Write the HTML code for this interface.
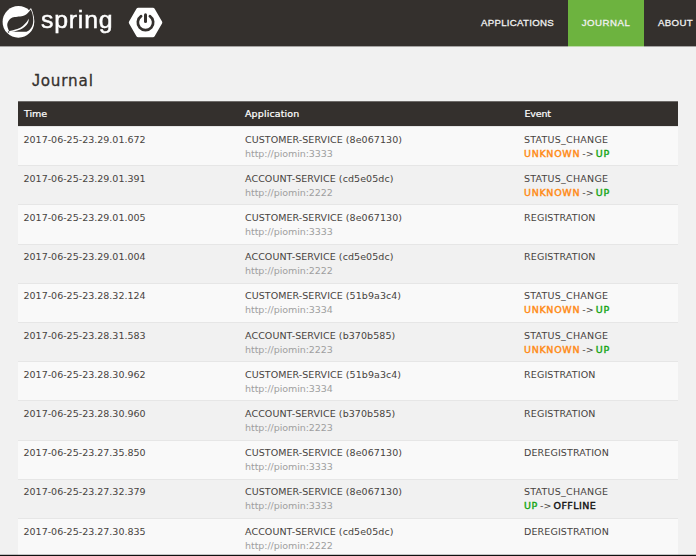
<!DOCTYPE html>
<html lang="en">
<head>
<meta charset="utf-8">
<title>Spring Boot Admin</title>
<style>
html,body{margin:0;padding:0;}
body{width:696px;height:556px;overflow:hidden;background:#f1f1f1;font-family:"DejaVu Sans","Liberation Sans",sans-serif;color:#34302d;position:relative;}
.nav{position:absolute;left:0;top:0;width:720px;height:46px;background:#34302d;box-shadow:0 1px 0 #a5a4a3;}
.word{position:absolute;left:41px;top:4.7px;-webkit-text-stroke:0.5px #fff;font-family:"Liberation Sans",sans-serif;font-size:24.8px;line-height:30px;color:#fff;letter-spacing:0.8px;will-change:transform;}
.menu{position:absolute;left:467px;top:0;height:46px;display:flex;}
.menu a{display:block;height:46px;line-height:45px;text-align:center;color:#f1f1f1;font-family:"Liberation Sans",sans-serif;font-size:9.7px;text-decoration:none;white-space:nowrap;letter-spacing:0.25px;-webkit-text-stroke:0.3px #f1f1f1;}
.menu a.active{background:#6db33f;box-shadow:0 1px 0 #bcd8aa;}
h1{position:absolute;left:32px;top:69px;margin:0;font-size:15.2px;line-height:24px;font-weight:normal;letter-spacing:0.82px;color:#34302d;-webkit-text-stroke:0.3px #34302d;}
h1 span{font-family:"Liberation Sans",sans-serif;font-size:15.8px;}
.tbl{position:absolute;left:18px;top:0;width:660px;font-size:9.5px;line-height:13.78px;color:#474340;}
.thead{position:absolute;left:0;top:101px;width:660px;height:25px;background:#34302d;color:#fff;box-shadow:inset 0 1px 0 #6d6a68;}
.thead div{position:absolute;top:6px;-webkit-text-stroke:0.22px #fff;letter-spacing:-0.08px;}
.row{position:absolute;left:0;width:660px;box-shadow:inset 0 1px 0 #e6e6e6;}
.row.odd{background:#f9f9f9;}
.row.even{background:#f1f1f1;}
.c{position:absolute;white-space:nowrap;}
.c1{left:5.5px;}
.c2{left:227px;}
.c3{left:506px;}
.muted{color:#9f9f9f;}
.b{-webkit-text-stroke:0.4px currentColor;}
.a1{letter-spacing:0.06px;}
.a2{letter-spacing:0.08px;}
.muted{letter-spacing:-0.06px;}
.e1{letter-spacing:0.24px;}
.e2{letter-spacing:0.15px;}
.e3{letter-spacing:0.13px;}
.st{word-spacing:-0.9px;}
.st .unk{letter-spacing:0.69px;}
.st .up{letter-spacing:0.6px;}
.st .off{letter-spacing:0.45px;}
.unk{color:#ff8a14;}
.up{color:#14a514;}
.off{color:#111;}
.bottomline{position:absolute;left:0;top:554px;width:696px;height:1px;background:rgba(17,17,17,0.22);border-bottom:1px solid #111;}
</style>
</head>
<body>
<div class="nav">
  <svg width="180" height="46" viewBox="0 0 180 46" style="position:absolute;left:0;top:0">
    <circle cx="18.4" cy="21.9" r="15.8" fill="#fff"/>
    <path d="M30.99,7.94 C31.28,8.67 32.19,10.59 32.70,12.34 C33.21,14.09 33.82,16.62 34.05,18.46 C34.27,20.29 34.29,21.77 34.05,23.35 C33.80,24.93 33.44,26.41 32.58,27.94 C31.72,29.46 29.52,31.76 28.91,32.52 L14.23,32.52 L25.24,14.17 Z" fill="#fff"/>
    <path d="M30.50,9.40 C30.24,9.81 29.58,11.06 28.91,11.85 C28.24,12.65 27.48,13.48 26.46,14.17 C25.45,14.87 24.32,15.59 22.80,16.01 C21.27,16.43 19.02,16.42 17.29,16.68 C15.56,16.95 13.72,17.10 12.40,17.60 C11.07,18.10 10.13,18.82 9.34,19.68 C8.54,20.54 7.97,21.77 7.63,22.74 C7.28,23.71 7.18,24.47 7.26,25.49 C7.34,26.51 7.79,27.91 8.12,28.85 C8.44,29.80 9.03,30.79 9.22,31.18 L15.15,31.79 L26.46,31.79 C26.99,31.45 28.73,30.67 29.65,29.77 C30.56,28.87 31.40,27.58 31.97,26.41 C32.54,25.23 32.87,24.06 33.07,22.74 C33.27,21.41 33.31,19.98 33.19,18.46 C33.07,16.93 32.64,14.84 32.34,13.56 C32.03,12.29 31.66,11.50 31.36,10.81 C31.05,10.12 30.64,9.64 30.50,9.40 Z" fill="#34302d"/>
    <path d="M9.46,30.93 C10.77,30.61 15.07,29.81 17.29,28.98 C19.51,28.14 21.27,27.04 22.80,25.92 C24.32,24.80 25.43,23.47 26.46,22.25 C27.50,21.02 28.61,19.19 29.03,18.58 C28.85,19.33 28.65,21.74 27.93,23.10 C27.22,24.47 26.02,25.69 24.75,26.77 C23.49,27.85 22.10,28.81 20.35,29.59 C18.60,30.36 16.05,31.01 14.23,31.42 C12.42,31.83 10.26,31.93 9.46,32.03 Z" fill="#fff"/>
    <circle cx="8.5" cy="32" r="0.75" fill="#34302d"/>
    <polygon points="130.8,22.55 138.18,9.8 152.92,9.8 160.3,22.55 152.92,35.3 138.18,35.3" fill="#fff" stroke="#fff" stroke-width="4" stroke-linejoin="round"/>
    <path d="M141.1,16.2 A7.7,7.7 0 1 0 149.9,16.2" fill="none" stroke="#34302d" stroke-width="2.7" stroke-linecap="round"/>
    <line x1="145.5" y1="14.8" x2="145.5" y2="21.6" stroke="#34302d" stroke-width="3" stroke-linecap="round"/>
  </svg>
  <span class="word">spring</span>
  <div class="menu">
    <a style="width:101px">APPLICATIONS</a><a class="active" style="width:76px;letter-spacing:0.5px">JOURNAL</a><a style="width:63px;letter-spacing:0.35px">ABOUT</a>
  </div>
</div>
<h1><span>J</span>ournal</h1>
<div class="tbl">
<div class="thead"><div style="left:6px">Time</div><div style="left:227px;letter-spacing:0.11px">Application</div><div style="left:506.5px;letter-spacing:-0.18px">Event</div></div>
<div class="row odd" style="top:126px;height:39px"><div class="c c1" style="top:6.91px">2017-06-25-23.29.01.672</div><div class="c c2" style="top:6.91px"><span class="a1">CUSTOMER-SERVICE (8e067130)</span><br><span class="muted">http://piomin:3333</span></div><div class="c c3" style="top:6.91px"><span class="e1">STATUS_CHANGE</span><br><span class="st"><span class="b unk">UNKNOWN</span> -&gt; <span class="b up">UP</span></span></div></div>
<div class="row even" style="top:165px;height:39px"><div class="c c1" style="top:6.91px">2017-06-25-23.29.01.391</div><div class="c c2" style="top:6.91px"><span class="a2">ACCOUNT-SERVICE (cd5e05dc)</span><br><span class="muted">http://piomin:2222</span></div><div class="c c3" style="top:6.91px"><span class="e1">STATUS_CHANGE</span><br><span class="st"><span class="b unk">UNKNOWN</span> -&gt; <span class="b up">UP</span></span></div></div>
<div class="row odd" style="top:204px;height:40px"><div class="c c1" style="top:6.91px">2017-06-25-23.29.01.005</div><div class="c c2" style="top:6.91px"><span class="a1">CUSTOMER-SERVICE (8e067130)</span><br><span class="muted">http://piomin:3333</span></div><div class="c c3" style="top:6.91px"><span class="e2">REGISTRATION</span></div></div>
<div class="row even" style="top:244px;height:39px"><div class="c c1" style="top:5.91px">2017-06-25-23.29.01.004</div><div class="c c2" style="top:5.91px"><span class="a2">ACCOUNT-SERVICE (cd5e05dc)</span><br><span class="muted">http://piomin:2222</span></div><div class="c c3" style="top:5.91px"><span class="e2">REGISTRATION</span></div></div>
<div class="row odd" style="top:283px;height:39px"><div class="c c1" style="top:5.91px">2017-06-25-23.28.32.124</div><div class="c c2" style="top:5.91px"><span class="a1">CUSTOMER-SERVICE (51b9a3c4)</span><br><span class="muted">http://piomin:3334</span></div><div class="c c3" style="top:5.91px"><span class="e1">STATUS_CHANGE</span><br><span class="st"><span class="b unk">UNKNOWN</span> -&gt; <span class="b up">UP</span></span></div></div>
<div class="row even" style="top:322px;height:39px"><div class="c c1" style="top:6.91px">2017-06-25-23.28.31.583</div><div class="c c2" style="top:6.91px"><span class="a2">ACCOUNT-SERVICE (b370b585)</span><br><span class="muted">http://piomin:2223</span></div><div class="c c3" style="top:6.91px"><span class="e1">STATUS_CHANGE</span><br><span class="st"><span class="b unk">UNKNOWN</span> -&gt; <span class="b up">UP</span></span></div></div>
<div class="row odd" style="top:361px;height:39px"><div class="c c1" style="top:6.91px">2017-06-25-23.28.30.962</div><div class="c c2" style="top:6.91px"><span class="a1">CUSTOMER-SERVICE (51b9a3c4)</span><br><span class="muted">http://piomin:3334</span></div><div class="c c3" style="top:6.91px"><span class="e2">REGISTRATION</span></div></div>
<div class="row even" style="top:400px;height:40px"><div class="c c1" style="top:6.91px">2017-06-25-23.28.30.960</div><div class="c c2" style="top:6.91px"><span class="a2">ACCOUNT-SERVICE (b370b585)</span><br><span class="muted">http://piomin:2223</span></div><div class="c c3" style="top:6.91px"><span class="e2">REGISTRATION</span></div></div>
<div class="row odd" style="top:440px;height:39px"><div class="c c1" style="top:5.91px">2017-06-25-23.27.35.850</div><div class="c c2" style="top:5.91px"><span class="a1">CUSTOMER-SERVICE (8e067130)</span><br><span class="muted">http://piomin:3333</span></div><div class="c c3" style="top:5.91px"><span class="e3">DEREGISTRATION</span></div></div>
<div class="row even" style="top:479px;height:39px"><div class="c c1" style="top:5.91px">2017-06-25-23.27.32.379</div><div class="c c2" style="top:5.91px"><span class="a1">CUSTOMER-SERVICE (8e067130)</span><br><span class="muted">http://piomin:3333</span></div><div class="c c3" style="top:5.91px"><span class="e1">STATUS_CHANGE</span><br><span class="st"><span class="b up">UP</span> -&gt; <span class="b off">OFFLINE</span></span></div></div>
<div class="row odd" style="top:518px;height:39px"><div class="c c1" style="top:6.91px">2017-06-25-23.27.30.835</div><div class="c c2" style="top:6.91px"><span class="a2">ACCOUNT-SERVICE (cd5e05dc)</span><br><span class="muted">http://piomin:2222</span></div><div class="c c3" style="top:6.91px"><span class="e3">DEREGISTRATION</span></div></div>
</div>
<div class="bottomline"></div>
</body>
</html>
